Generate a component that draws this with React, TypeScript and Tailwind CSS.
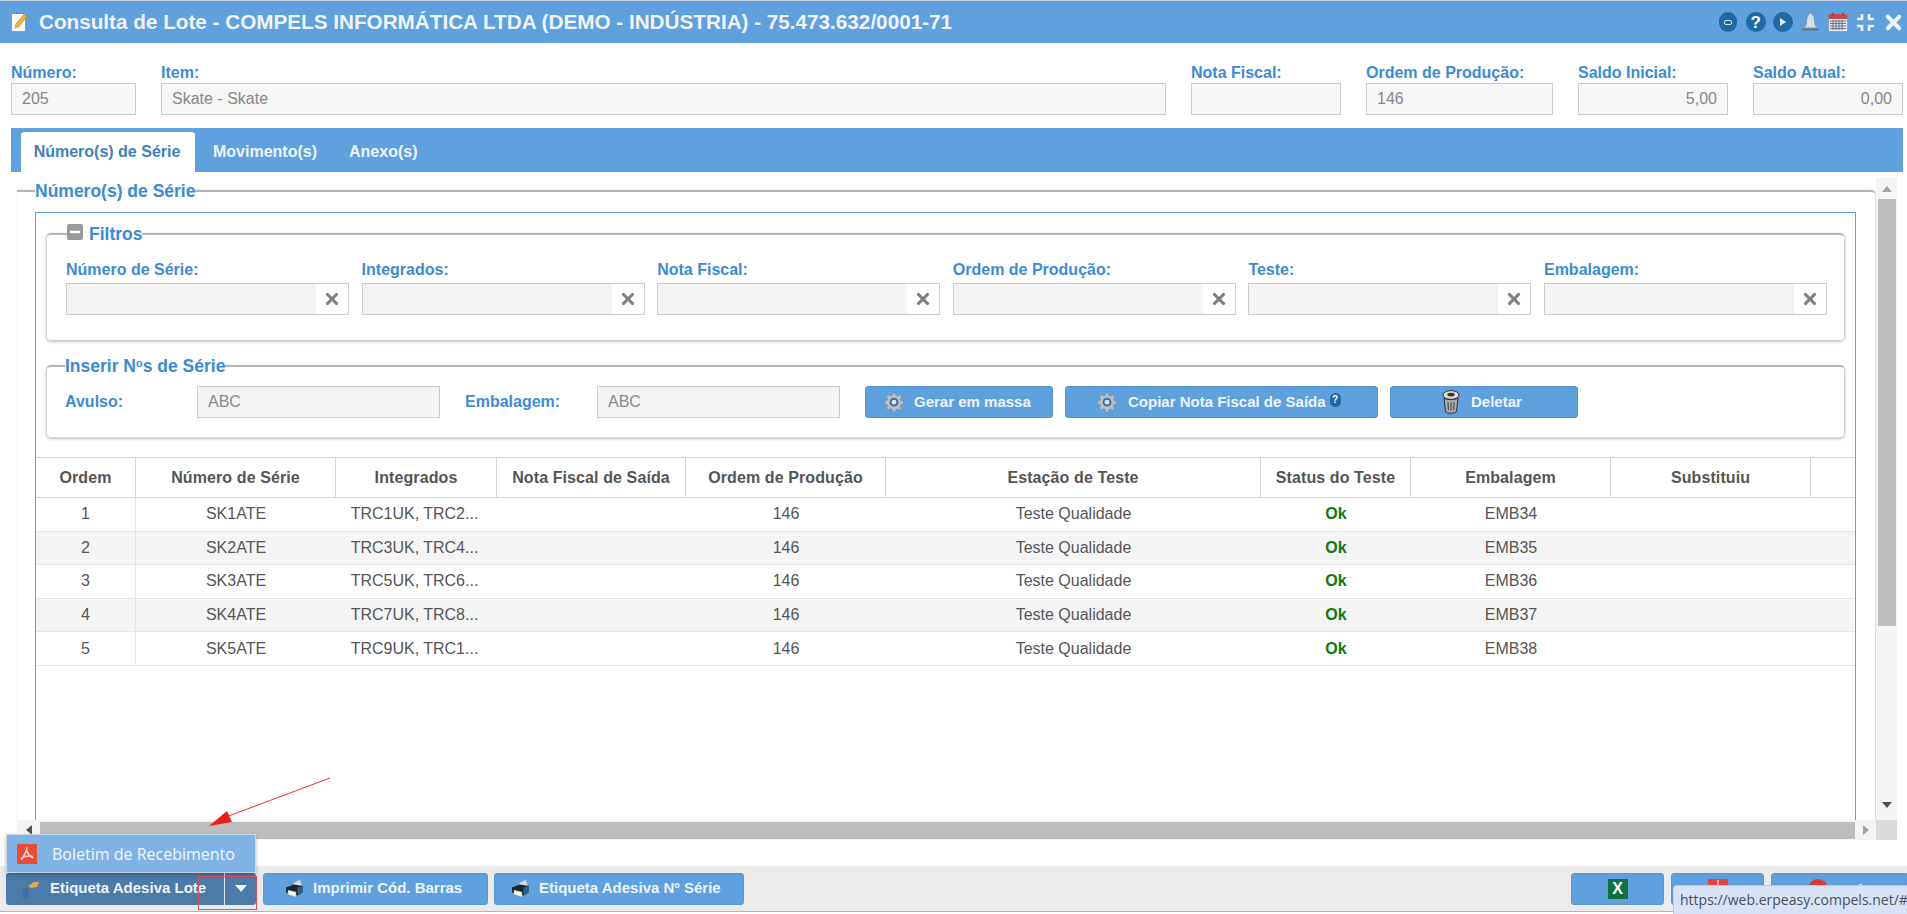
import React from 'react';
import { X, Minus } from 'lucide-react';

const rows = [
  ['1', 'SK1ATE', 'TRC1UK, TRC2...', 'EMB34'],
  ['2', 'SK2ATE', 'TRC3UK, TRC4...', 'EMB35'],
  ['3', 'SK3ATE', 'TRC5UK, TRC6...', 'EMB36'],
  ['4', 'SK4ATE', 'TRC7UK, TRC8...', 'EMB37'],
  ['5', 'SK5ATE', 'TRC9UK, TRC1...', 'EMB38'],
];

const columns = [
  { title: 'Ordem', width: 'w-[100px]' },
  { title: 'Número de Série', width: 'w-[200px]' },
  { title: 'Integrados', width: 'w-[161px]' },
  { title: 'Nota Fiscal de Saída', width: 'w-[189px]' },
  { title: 'Ordem de Produção', width: 'w-[200px]' },
  { title: 'Estação de Teste', width: 'w-[375px]' },
  { title: 'Status do Teste', width: 'w-[150px]' },
  { title: 'Embalagem', width: 'w-[200px]' },
  { title: 'Substituiu', width: 'w-[200px]' },
];

const filters = ['Número de Série:', 'Integrados:', 'Nota Fiscal:', 'Ordem de Produção:', 'Teste:', 'Embalagem:'];

const Gear = () => (
  <svg width="20" height="20" viewBox="0 0 20 20" className="shrink-0">
    <path d="M8.500 1h3l.5 2.400 1.600.7 2.100-1.300 2 2.100-1.300 2 .7 1.700 2.400.5v2.800l-2.400.6-.7 1.600 1.300 2.100-2 2-2.100-1.300-1.600.7-.5 2.400h-3L8 17.400l-1.600-.7-2.100 1.300-2-2 1.300-2.100-.7-1.600L.5 11.700V8.900L2.900 8.400l.7-1.700-1.300-2 2-2.100 2.100 1.300L8 3.200z" fill="#b9c0c8" stroke="#7f8790" strokeWidth="0.6" />
    <circle cx="10" cy="10.200" r="4.400" fill="#3f6f9f" />
    <circle cx="10" cy="10.200" r="2.400" fill="#dce6f0" />
  </svg>
);

const Trash = () => (
  <svg width="20" height="24" viewBox="0 0 20 24" className="shrink-0">
    <ellipse cx="10" cy="5" rx="8" ry="4.400" fill="#d8d8d8" stroke="#333" strokeWidth="1" />
    <ellipse cx="10" cy="4.600" rx="3.600" ry="1.900" fill="#333" />
    <path d="M3 8l1.400 13c.2 1.500 2.800 2.300 5.600 2.300s5.400-.8 5.600-2.300L17 8c-3.600 2.200-10.400 2.200-14 0z" fill="#a9a9a9" stroke="#333" strokeWidth="1" />
    <path d="M7 12l.4 8M10 12.500V20.500M13 12l-.4 8" stroke="#444" strokeWidth="1" />
  </svg>
);

const Printer = () => (
  <svg width="19" height="19" viewBox="0 0 19 19" className="shrink-0">
    <path d="M8 4l7-3.500 2 6-7 3z" fill="#d6dde4" stroke="#8a949e" strokeWidth="0.5" />
    <path d="M1 8.500L9 5.500l9 1.500v6l-5 3.500-12-3z" fill="#20262c" />
    <path d="M12.500 8.500l5.500-1.500v6l-5.500 3.500z" fill="#2f5f86" />
    <path d="M3 11l8 2v5l-8-2.500z" fill="#f5f5f5" stroke="#9a9a9a" strokeWidth="0.4" />
  </svg>
);

const ActionButton = ({ icon, label, className }: { icon: React.ReactNode; label: string; className: string }) => (
  <button className={`h-8 flex items-center rounded-[3px] bg-[#5fa0de] border border-[#5a97d2] text-[#eef4fb] font-bold text-[15px] ${className}`}>
    {icon}
    <span className="whitespace-nowrap">{label}</span>
  </button>
);

const HeaderField = ({ label, value, className, right }: { label: string; value?: string; className: string; right?: boolean }) => (
  <div className={className}>
    <div className="h-5 text-[16px] leading-5 font-bold text-[#3b8bd8] whitespace-nowrap">{label}</div>
    <div className={`h-8 border border-[#cccccc] bg-[#f7f7f7] text-[#888888] text-[16px] leading-[30px] px-[10px] ${right ? 'text-right' : ''}`}>{value}</div>
  </div>
);

export default function App() {
  return (
    <div className="relative w-[1907px] h-[914px] overflow-hidden bg-white font-['Liberation_Sans',Arial,sans-serif]">
      <div className="h-px bg-[#c5d3e0]" />

      {/* title bar */}
      <div className="h-[42px] bg-[#5fa0de] flex items-center pl-[10px] text-white">
        <svg width="19" height="22" viewBox="0 0 19 22" className="shrink-0">
          <path d="M1.500 2.500h14v18h-14z" fill="#fbfbfb" stroke="#9a9a9a" />
          <path d="M4 3V1.500M7 3V1.500M10 3V1.500M13 3V1.500" stroke="#777" />
          <path d="M5 17l1-4 8-10 3 2.500-8 10z" fill="#f0b93a" stroke="#b67f1c" strokeWidth="0.6" />
        </svg>
        <div className="ml-[10px] text-[20.700px] font-bold text-[#f0f5fb] whitespace-nowrap">
          Consulta de Lote - COMPELS INFORMÁTICA LTDA (DEMO - INDÚSTRIA) - 75.473.632/0001-71
        </div>
        <div className="ml-auto flex items-center">
          <div className="w-[27.5px] flex justify-center">
            <div className="w-[18px] h-5 rounded-full bg-[#1f6aa5] flex items-center justify-center">
              <div className="w-2 h-[5px] rounded-[2px] border border-[#d5e3f0]" />
            </div>
          </div>
          <div className="w-[27.5px] flex justify-center">
            <div className="w-5 h-5 rounded-full bg-[#1f6aa5] flex items-center justify-center text-white text-[17px] font-bold leading-none">?</div>
          </div>
          <div className="w-[27.5px] flex justify-center">
            <div className="w-5 h-5 rounded-full bg-[#1f6aa5] flex items-center justify-center">
              <svg width="8" height="10" viewBox="0 0 8 10"><path d="M1 1l6 4-6 4z" fill="#e6eef6" /></svg>
            </div>
          </div>
          <div className="w-[27.5px] flex justify-center">
            <svg width="19" height="21" viewBox="0 0 19 21">
              <path d="M9.500 1c1 0 1.500.8 1.500 1.600C13 3.500 13.500 6 13.500 9.500c0 3 1 5 3 6.500h-14c2-1.500 3-3.500 3-6.500C5.500 6 6 3.500 8 2.600 8 1.800 8.500 1 9.500 1z" fill="#d9dee4" stroke="#7e8c9b" strokeWidth="0.8" />
              <path d="M1.500 16.500h16v2h-16z" fill="#5f7286" />
            </svg>
          </div>
          <div className="w-[27.5px] flex justify-center">
            <svg width="20" height="20" viewBox="0 0 20 20">
              <rect x="0.500" y="2" width="19" height="17.500" rx="1" fill="#dfe4ea" stroke="#7f8a96" strokeWidth="0.6" />
              <rect x="0.500" y="2" width="19" height="5" rx="1" fill="#c9484a" />
              <path d="M5 0.500v3.500M15 0.500v3.500" stroke="#5a5a5a" strokeWidth="1.400" />
              <path d="M2 9h16M2 11.500h16M2 14h16M2 16.500h16M5 8v10M8 8v10M11 8v10M14 8v10" stroke="#55606c" strokeWidth="0.8" />
            </svg>
          </div>
          <div className="w-[27.5px] flex justify-center">
            <svg width="19" height="19" viewBox="0 0 19 19">
              <path d="M6 1v5H1M13 1v5h5M6 18v-5H1M13 18v-5h5" fill="none" stroke="#eef4fb" strokeWidth="2.600" />
            </svg>
          </div>
          <div className="w-[27.5px] flex justify-center">
            <X size={23} strokeWidth={4.2} className="text-[#eef4fb]" />
          </div>
        </div>
      </div>

      {/* lot fields */}
      <div className="flex pt-5 pl-[11px] pr-1">
        <HeaderField label="Número:" value="205" className="w-[125px] mr-[25px]" />
        <HeaderField label="Item:" value="Skate - Skate" className="w-[1005px] mr-[25px]" />
        <HeaderField label="Nota Fiscal:" className="w-[150px] mr-[25px]" />
        <HeaderField label="Ordem de Produção:" value="146" className="w-[187px] mr-[25px]" />
        <HeaderField label="Saldo Inicial:" value="5,00" right className="w-[150px] mr-[25px]" />
        <HeaderField label="Saldo Atual:" value="0,00" right className="w-[150px]" />
      </div>

      {/* tabs */}
      <div className="mt-[13px] ml-[11px] mr-1 h-11 bg-[#5fa0de] flex items-end pl-[10px] text-[16px] font-bold">
        <div className="w-[174px] h-10 bg-white rounded-t-[3px] flex items-center justify-center pr-[2px] text-[#3f7fbd] whitespace-nowrap">Número(s) de Série</div>
        <div className="h-10 flex items-center ml-[18px] text-[#eef4fb]">Movimento(s)</div>
        <div className="h-10 flex items-center ml-[32px] text-[#eef4fb]">Anexo(s)</div>
      </div>

      {/* content + scrollbars */}
      <div className="flex pl-[17px] h-[648px]">
        <div className="w-[1859px]">
          <fieldset className="mt-[9px] h-[639px] border-t-2 border-r border-[#b5b5b5] border-r-[#dddddd] rounded-tr-[5px] pl-[18px] pr-[19px] shadow-[0_-1px_2px_rgba(0,0,0,0.08)]">
            <legend className="text-[17.500px] leading-5 font-bold text-[#3b8bd8]">Número(s) de Série</legend>
            <div className="mt-[11px] h-[608px] border border-b-0 border-[#5fa0de]">
              <div className="px-[10px] pt-[11px]">
                <fieldset className="h-[117px] border border-[#d2d2d2] border-t-2 border-t-[#b5b5b5] rounded-[5px] pl-[19px] shadow-[0_1px_3px_rgba(0,0,0,0.25)]">
                  <legend className="ml-[1px] text-[17.500px] leading-5 font-bold text-[#3b8bd8] flex items-center gap-[6px]">
                    <span className="w-4 h-4 -mt-1 rounded-[2px] bg-[#9a9a9a] flex items-center justify-center"><Minus size={14} strokeWidth={4} className="text-white" /></span>
                    Filtros
                  </legend>
                  <div className="flex gap-[12.600px] pt-4">
                    {filters.map((f) => (
                      <div key={f} className="w-[283px]">
                        <div className="h-5 mb-[3px] text-[16px] leading-5 font-bold text-[#3b8bd8] whitespace-nowrap">{f}</div>
                        <div className="h-8 flex border border-[#cccccc]">
                          <div className="flex-1 bg-[#f3f3f3]" />
                          <div className="w-[32px] bg-white flex items-center justify-center">
                            <X size={18} strokeWidth={4.2} className="text-[#7f7f7f]" />
                          </div>
                        </div>
                      </div>
                    ))}
                  </div>
                </fieldset>

                <fieldset className="mt-[15px] h-[82px] border border-[#d2d2d2] border-t-2 border-t-[#b5b5b5] rounded-[5px] pl-[18px] shadow-[0_1px_3px_rgba(0,0,0,0.25)]">
                  <legend className="text-[17.500px] leading-5 font-bold text-[#3b8bd8]">
                    Inserir N<sup className="text-[11px] leading-none">o</sup>s de Série
                  </legend>
                  <div className="flex items-center pt-[10px] text-[16px]">
                    <div className="w-[132px] font-bold text-[#3b8bd8]">Avulso:</div>
                    <div className="w-[243px] h-8 border border-[#cccccc] bg-[#f3f3f3] text-[#888888] leading-[30px] px-[10px]">ABC</div>
                    <div className="w-[157px] pl-[25px] font-bold text-[#3b8bd8]">Embalagem:</div>
                    <div className="w-[243px] h-8 border border-[#cccccc] bg-[#f3f3f3] text-[#888888] leading-[30px] px-[10px]">ABC</div>
                    <ActionButton icon={<Gear />} label="Gerar em massa" className="ml-[25px] w-[188px] pl-[18px] gap-[10px]" />
                    <button className="ml-3 w-[313px] h-8 flex items-center rounded-[3px] bg-[#5fa0de] border border-[#5a97d2] text-[#eef4fb] font-bold text-[15px] pl-[31px] gap-[11px]">
                      <Gear />
                      <span className="whitespace-nowrap">Copiar Nota Fiscal de Saída</span>
                      <span className="-ml-[7px] -mt-1 w-[11px] h-[14px] rounded-full bg-[#1f6aa5] text-white text-[10px] leading-[14px]">?</span>
                    </button>
                    <ActionButton icon={<Trash />} label="Deletar" className="ml-3 w-[188px] pl-[50px] gap-[10px]" />
                  </div>
                </fieldset>
              </div>

              {/* series table */}
              <div className="mt-[19px] text-[16px] text-[#555555]">
                <div className="flex h-[41px] border-y border-[#d5d5d5] font-bold tracking-[0.1px]">
                  {columns.map((c) => (
                    <div key={c.title} className={`${c.width} flex items-center justify-center border-r border-[#d5d5d5] whitespace-nowrap`}>{c.title}</div>
                  ))}
                </div>
                {rows.map((r, i) => (
                  <div key={r[0]} className={`flex h-[33.6px] border-b border-[#e6e6e6] ${i % 2 === 1 ? 'bg-[#f5f5f5]' : 'bg-white'}`}>
                    <div className="w-[100px] flex items-center justify-center border-r border-[#e6e6e6]">{r[0]}</div>
                    <div className="w-[200px] flex items-center justify-center">{r[1]}</div>
                    <div className="w-[161px] flex items-center justify-center pr-1 whitespace-nowrap">{r[2]}</div>
                    <div className="w-[189px]" />
                    <div className="w-[200px] flex items-center justify-center">146</div>
                    <div className="w-[375px] flex items-center justify-center">Teste Qualidade</div>
                    <div className="w-[150px] flex items-center justify-center font-bold text-[#0b7a0b]">Ok</div>
                    <div className="w-[200px] flex items-center justify-center">{r[3]}</div>
                  </div>
                ))}
              </div>
            </div>
          </fieldset>
        </div>

        {/* vertical scrollbar */}
        <div className="mt-[6px] w-[21px] flex flex-col items-center bg-[#f4f4f4]">
          <div className="h-[21px] flex items-center justify-center">
            <svg width="10" height="6" viewBox="0 0 10 6"><path d="M5 0l5 6H0z" fill="#a3a3a3" /></svg>
          </div>
          <div className="h-[427px] w-[18px] bg-[#bdbdbd]" />
          <div className="flex-1" />
          <div className="h-[27px] pb-[3px] flex items-center justify-center">
            <svg width="10" height="6" viewBox="0 0 10 6"><path d="M0 0h10L5 6z" fill="#505050" /></svg>
          </div>
        </div>
      </div>

      {/* horizontal scrollbar */}
      <div className="ml-[17px] w-[1880px] h-5 flex items-center bg-[#f4f4f4]">
        <div className="w-[23px] flex items-center justify-center">
          <svg width="6" height="10" viewBox="0 0 6 10"><path d="M6 0v10L0 5z" fill="#505050" /></svg>
        </div>
        <div className="w-[1815px] h-[17px] bg-[#bdbdbd]" />
        <div className="w-[21px] flex items-center justify-center">
          <svg width="6" height="10" viewBox="0 0 6 10"><path d="M0 0l6 5-6 5z" fill="#a3a3a3" /></svg>
        </div>
        <div className="w-[21px] h-5 bg-[#d9d9d9]" />
      </div>

      {/* footer actions */}
      <div className="mt-[26px] h-[46px] bg-[#ebebeb] border-b border-[#b5b5b5] flex items-center pl-[6px] text-[15px] font-bold">
        <div className="w-[250px] h-8 rounded-[3px] bg-[#4a7ba9] flex items-center text-[#eef4fb]">
          <svg width="20" height="20" viewBox="0 0 20 20" className="ml-[14px] shrink-0">
            <path d="M8 7l6-4h5l-2 5-6 1z" fill="#e3a94a" />
            <path d="M2 19l1-9 5-1 1 9z" fill="#41719f" />
          </svg>
          <span className="ml-[10px] whitespace-nowrap">Etiqueta Adesiva Lote</span>
          <span className="ml-[18px] w-px h-8 bg-[#dfe8f0]" />
          <span className="flex-1 flex justify-center">
            <svg width="12" height="7" viewBox="0 0 12 7"><path d="M0 0h12L6 7z" fill="#f2f5f8" /></svg>
          </span>
        </div>
        <ActionButton icon={<Printer />} label="Imprimir Cód. Barras" className="ml-[7px] w-[225px] pl-[21px] gap-[9px]" />
        <ActionButton icon={<Printer />} label="Etiqueta Adesiva Nº Série" className="ml-[6px] w-[250px] pl-[16px] gap-[9px]" />
        <button className="ml-auto w-[93px] h-8 rounded-[3px] bg-[#5fa0de] border border-[#5a97d2] flex items-center justify-center">
          <span className="w-5 h-5 bg-[#107243] text-white text-[16px] font-bold leading-5 text-center">X</span>
        </button>
        <button className="ml-[7px] w-[93px] h-8 rounded-[3px] bg-[#5fa0de] border border-[#5a97d2] flex items-start justify-center">
          <span className="mt-[5px] w-5 h-5 bg-[#ea4335] flex justify-center">
            <span className="mt-[1px] w-[2px] h-[5px] bg-[#f7b4ac]" />
          </span>
        </button>
        <button className="ml-[7px] w-[136px] h-8 rounded-l-[3px] bg-[#5fa0de] border border-[#5a97d2] flex items-start pl-[36px] gap-3 text-[#eef4fb]">
          <span className="mt-[5px] w-5 h-5 rounded-full bg-[#d93a32]" />
          <span className="mt-[6px] leading-5">Sair</span>
        </button>
      </div>

      {/* overlays: dropdown menu, browser status bubble and red annotation */}
      <div className="absolute left-[6px] top-[834px] w-[250px] h-[39px] bg-[#7fb3e5] border border-[#c9d6e3] shadow-[0_2px_4px_rgba(0,0,0,0.25)] flex items-center pl-[10px] font-['Open_Sans',sans-serif] text-[16px] text-[#f2f6fb]">
        <svg width="20" height="20" viewBox="0 0 20 20" className="shrink-0">
          <rect width="20" height="20" fill="#ea4c35" />
          <path d="M10 3.500c-.5 4-2.500 8-6 12.500M10 7c1 3 3 5.500 6.500 7M5 14c3-2 6-2.500 11-1.500" fill="none" stroke="#fbd8d2" strokeWidth="1.600" />
        </svg>
        <span className="ml-[15px] whitespace-nowrap">Boletim de Recebimento</span>
      </div>

      <div className="absolute left-[1673px] top-[885px] w-[234px] h-[29px] bg-[#d8e2f6] border-t border-l border-[#c2c9d6] rounded-tl-[4px] pl-[6px] font-['Open_Sans',sans-serif] text-[14px] leading-[27px] text-[#4a5060] whitespace-nowrap overflow-hidden">
        https://web.erpeasy.compels.net/#
      </div>

      <div className="absolute left-[198px] top-[876px] w-[59px] h-[34px] border border-[#e05060]" />
      <svg className="absolute left-[200px] top-[770px]" width="140" height="64" viewBox="0 0 140 64">
        <path d="M130 8L26 47" stroke="#f03030" strokeWidth="1" />
        <path d="M9 56l18-15 5 11z" fill="#ee1c1c" />
      </svg>
    </div>
  );
}
